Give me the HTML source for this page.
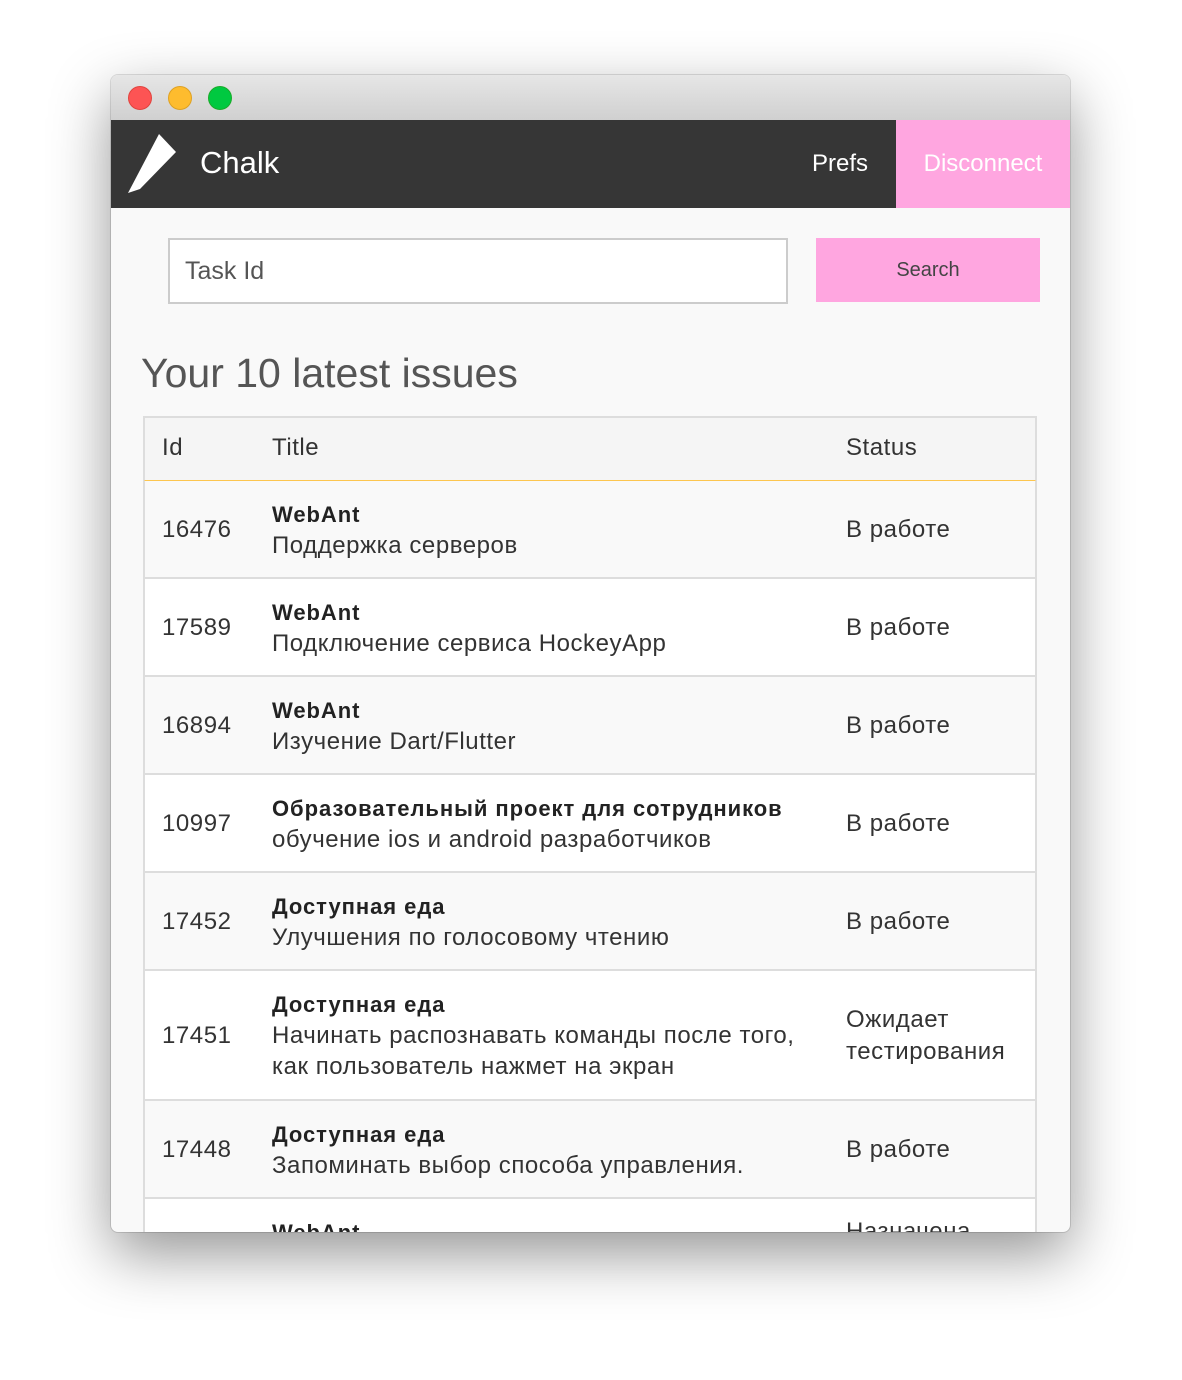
<!DOCTYPE html>
<html><head><meta charset="utf-8">
<style>
*{margin:0;padding:0;box-sizing:border-box}
body{width:1182px;height:1380px;background:#fff;font-family:"Liberation Sans","DejaVu Sans",sans-serif;position:relative;overflow:hidden}
.win{position:absolute;left:111px;top:75px;width:959px;height:1157px;border-radius:7px;overflow:hidden;background:#f9f9f9;box-shadow:0 22px 60px rgba(0,0,0,.42),0 0 0 1px rgba(0,0,0,.12)}
.tb{position:absolute;left:0;top:0;width:100%;height:45px;background:linear-gradient(#e6e6e6,#d0d0d0)}
.dot{position:absolute;top:11px;width:24px;height:24px;border-radius:50%}
.nav{position:absolute;left:0;top:45px;width:100%;height:88px;background:#363636}
.abs{position:absolute;white-space:nowrap}
.row{position:absolute;left:32px;width:894px;border-left:2px solid #ddd;border-right:2px solid #ddd;border-bottom:2px solid #ddd;background:#fff}
.t{font-size:24px;color:#333;position:absolute;white-space:nowrap;letter-spacing:0.55px;margin-top:1px}
.b{font-weight:bold;font-size:22px;color:#222;letter-spacing:0.95px}
</style></head><body>
<div class="win">
 <div class="tb">
  <div class="dot" style="left:17px;background:#fd5454;border:1px solid #e0443e"></div>
  <div class="dot" style="left:57px;background:#febc2e;border:1px solid #dea123"></div>
  <div class="dot" style="left:97px;background:#00c940;border:1px solid #1aab29"></div>
 </div>
 <div class="nav">
  <svg class="abs" style="left:16px;top:13px" width="50" height="62" viewBox="0 0 50 62"><polygon points="32,1 49,19 13,56 1,60" fill="#fff"/></svg>
  <div class="abs" style="left:89px;top:25px;font-size:31px;color:#fff">Chalk</div>
  <div class="abs" style="left:701px;top:30px;font-size:24px;color:#fff">Prefs</div>
  <div class="abs" style="left:785px;top:0;width:174px;height:88px;background:#ffa6e0"></div>
  <div class="abs" style="left:785px;top:30px;width:174px;text-align:center;font-size:24px;color:#fff">Disconnect</div>
 </div>
 <div class="abs" style="left:57px;top:163px;width:620px;height:66px;border:2px solid #ccc;background:#fff"></div>
 <div class="abs" style="left:74px;top:182px;font-size:25px;color:#555">Task Id</div>
 <div class="abs" style="left:705px;top:163px;width:224px;height:64px;background:#ffa6e0;text-align:center;line-height:64px;font-size:20px;color:#444">Search</div>
 <div class="abs" style="left:30px;top:275px;font-size:41px;color:#555">Your 10 latest issues</div>
 <div class="row" style="top:341px;height:66px;background:#f5f5f5;border-top:2px solid #ddd;border-bottom:2px solid #fdc64f">
  <div class="t" style="left:17px;top:15px">Id</div><div class="t" style="left:127px;top:15px">Title</div><div class="t" style="left:701px;top:15px">Status</div>
 </div>
 <div class="row" style="top:406px;height:98px;background:#f9f9f9">
  <div class="t" style="left:17px;top:34px">16476</div><div class="t b" style="left:127px;top:20px">WebAnt</div><div class="t" style="left:127px;top:50px">Поддержка серверов</div><div class="t" style="left:701px;top:34px">В работе</div>
 </div>
 <div class="row" style="top:504px;height:98px">
  <div class="t" style="left:17px;top:34px">17589</div><div class="t b" style="left:127px;top:20px">WebAnt</div><div class="t" style="left:127px;top:50px">Подключение сервиса HockeyApp</div><div class="t" style="left:701px;top:34px">В работе</div>
 </div>
 <div class="row" style="top:602px;height:98px;background:#f9f9f9">
  <div class="t" style="left:17px;top:34px">16894</div><div class="t b" style="left:127px;top:20px">WebAnt</div><div class="t" style="left:127px;top:50px">Изучение Dart/Flutter</div><div class="t" style="left:701px;top:34px">В работе</div>
 </div>
 <div class="row" style="top:700px;height:98px">
  <div class="t" style="left:17px;top:34px">10997</div><div class="t b" style="left:127px;top:20px">Образовательный проект для сотрудников</div><div class="t" style="left:127px;top:50px">обучение ios и android разработчиков</div><div class="t" style="left:701px;top:34px">В работе</div>
 </div>
 <div class="row" style="top:798px;height:98px;background:#f9f9f9">
  <div class="t" style="left:17px;top:34px">17452</div><div class="t b" style="left:127px;top:20px">Доступная еда</div><div class="t" style="left:127px;top:50px">Улучшения по голосовому чтению</div><div class="t" style="left:701px;top:34px">В работе</div>
 </div>
 <div class="row" style="top:896px;height:130px">
  <div class="t" style="left:17px;top:50px">17451</div><div class="t b" style="left:127px;top:20px">Доступная еда</div><div class="t" style="left:127px;top:50px">Начинать распознавать команды после того,</div><div class="t" style="left:127px;top:81px">как пользователь нажмет на экран</div><div class="t" style="left:701px;top:34px">Ожидает</div><div class="t" style="left:701px;top:66px">тестирования</div>
 </div>
 <div class="row" style="top:1026px;height:98px;background:#f9f9f9">
  <div class="t" style="left:17px;top:34px">17448</div><div class="t b" style="left:127px;top:20px">Доступная еда</div><div class="t" style="left:127px;top:50px">Запоминать выбор способа управления.</div><div class="t" style="left:701px;top:34px">В работе</div>
 </div>
 <div class="row" style="top:1124px;height:98px">
  <div class="t b" style="left:127px;top:20px">WebAnt</div><div class="t" style="left:701px;top:18px">Назначена</div>
 </div>
</div>
</body></html>
